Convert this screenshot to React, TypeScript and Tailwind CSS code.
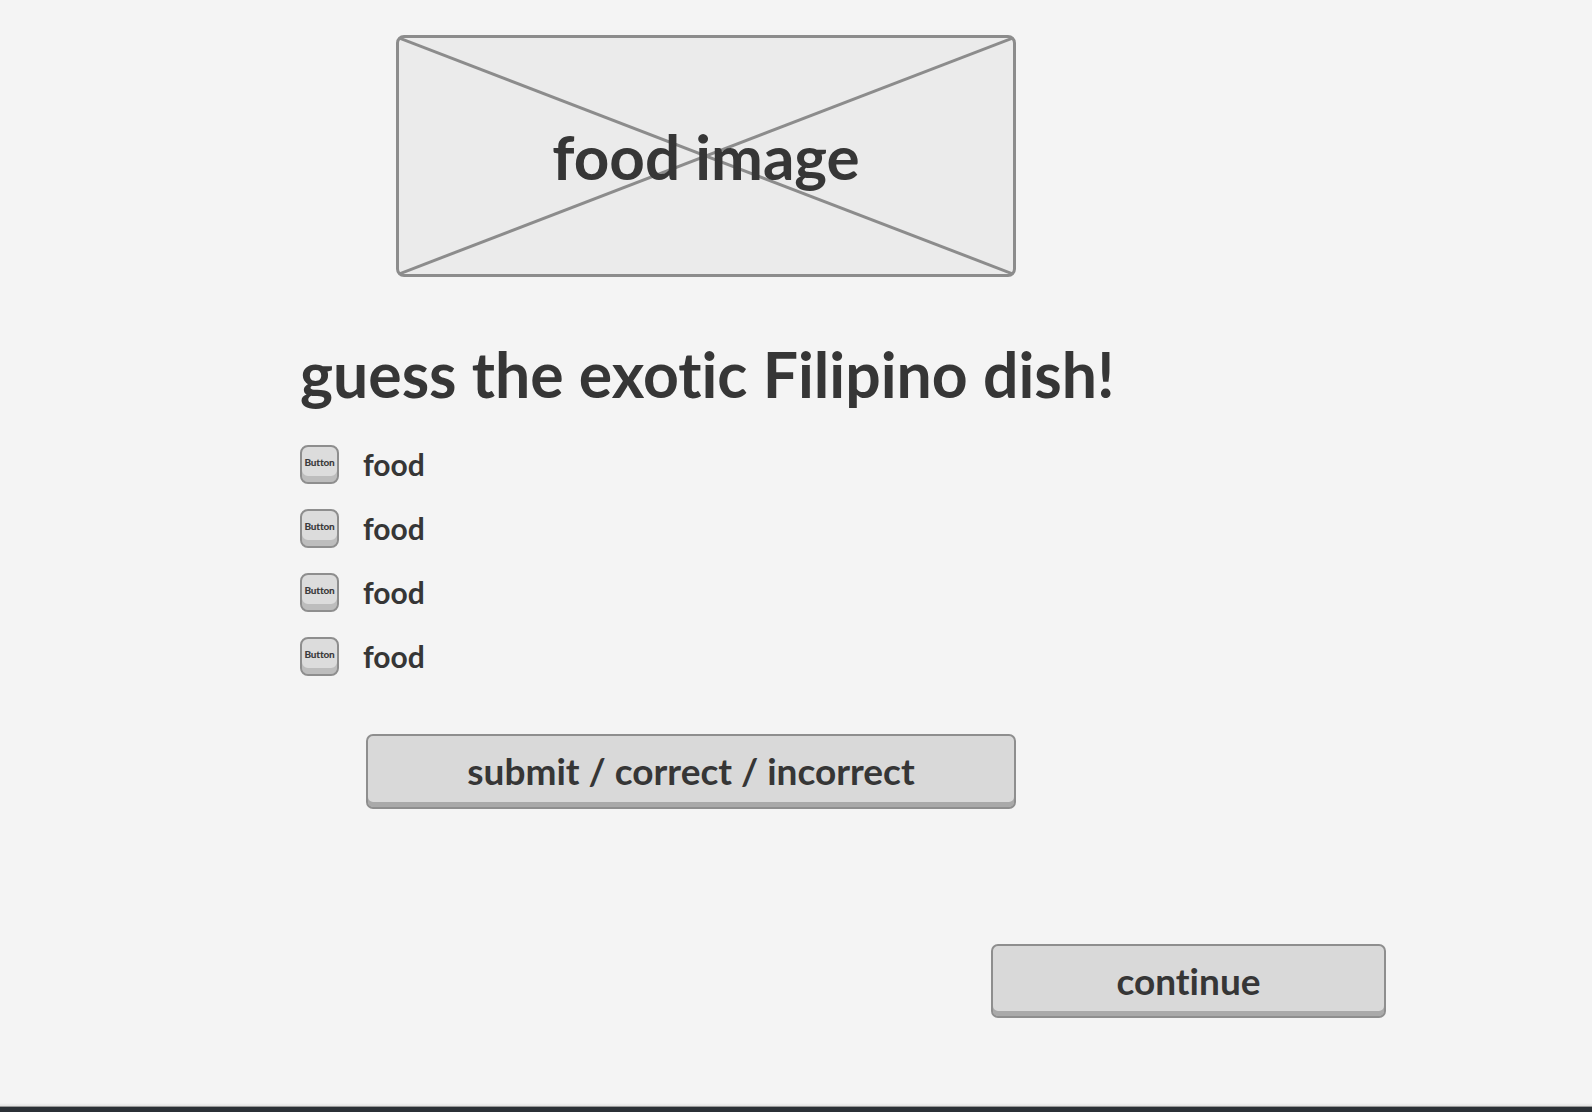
const options = ["food", "food", "food", "food"];

function ImagePlaceholder() {
  return (
    <div className="relative ml-[96px] flex h-[242px] w-[620px] items-center justify-center rounded-[8px] border-[3px] border-[#8c8c8c] bg-[#ebebeb]">
      <svg
        className="absolute inset-0 h-full w-full"
        viewBox="0 0 100 100"
        preserveAspectRatio="none"
      >
        <line x1="0" y1="0" x2="100" y2="100" stroke="#8c8c8c" strokeWidth="3" vectorEffect="non-scaling-stroke" />
        <line x1="100" y1="0" x2="0" y2="100" stroke="#8c8c8c" strokeWidth="3" vectorEffect="non-scaling-stroke" />
      </svg>
      <span className="relative text-[62px] font-bold leading-none">food image</span>
    </div>
  );
}

function MiniButton() {
  return (
    <div className="flex h-[39px] w-[39px] items-center justify-center rounded-[8px] border-[2.5px] border-[#8e8e8e] bg-[#dcdcdc] shadow-[inset_0_-6px_0_#bdbdbd]">
      <span className="-mt-1 text-[10px] font-black leading-none tracking-[-0.2px] text-[#3c3c3c]">Button</span>
    </div>
  );
}

function WireButton({ label, className }: { label: string; className: string }) {
  return (
    <button
      className={`flex items-center justify-center rounded-[7px] border-[2.5px] border-[#8e8e8e] bg-[#d9d9d9] pb-[1px] shadow-[inset_0_-5px_0_#a9a9a9] text-[37px] font-bold leading-none text-[#363636] ${className}`}
    >
      {label}
    </button>
  );
}

export default function App() {
  return (
    <div className="flex h-[1112px] flex-col bg-[#f4f4f4] font-['Lato',sans-serif] text-[#363636] [font-variant-ligatures:none]">
      <main className="flex flex-col items-start pl-[300px] pt-[35px]">
        <ImagePlaceholder />

        <h1 className="mt-[66px] text-[62.5px] font-bold leading-none">
          guess the exotic Filipino dish!
        </h1>

        <div className="mt-[39px] flex flex-col gap-[25px]">
          {options.map((option, i) => (
            <label key={i} className="flex items-center gap-[24px]">
              <MiniButton />
              <span className="text-[30px] font-bold leading-none">{option}</span>
            </label>
          ))}
        </div>

        <WireButton label="submit / correct / incorrect" className="ml-[66px] mt-[58px] h-[75px] w-[650px]" />

        <WireButton label="continue" className="ml-[691px] mt-[135px] h-[74px] w-[395px]" />
      </main>

      <div className="mt-auto">
        <div className="h-[3px] bg-gradient-to-b from-[#f4f4f4] to-[#e2e2e2]" />
        <div className="h-px bg-[#9a9a9a]" />
        <div className="h-[5px] bg-[#2b3036]" />
      </div>
    </div>
  );
}
